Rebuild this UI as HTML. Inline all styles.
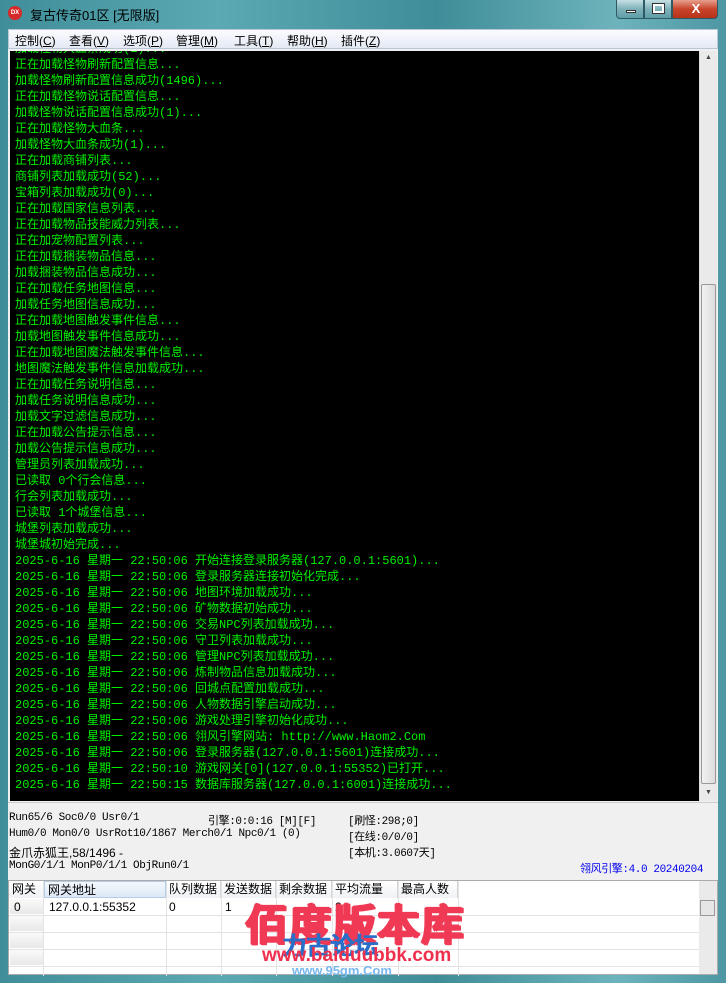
<!DOCTYPE html>
<html><head><meta charset="utf-8"><style>
*{margin:0;padding:0;box-sizing:border-box}
body{width:726px;height:983px;overflow:hidden;position:relative;background:#4a9aa6;font-family:"Liberation Sans","Noto Sans CJK SC",sans-serif}
.frame{position:absolute;left:0;top:0;width:726px;height:983px;background:linear-gradient(90deg,#3f8e99 0%,#5aa9b3 30%,#3f8d98 60%,#6db3bc 85%,#4d97a3 100%)}
.title{position:absolute;left:30px;top:5px;font-size:13px;color:#000}
.icon{position:absolute;left:8px;top:6px;width:14px;height:14px;border-radius:50%;background:#d42a2a;color:#fff;font-size:6px;font-weight:bold;text-align:center;line-height:14px}
.btn{position:absolute;top:0;height:19px;border:1px solid #2d5a63;border-top:none;background:linear-gradient(#c5e0e4,#7fb1ba 50%,#5f9ea8)}
.menu{position:absolute;left:8px;top:29px;width:710px;height:20px;background:linear-gradient(#fbfcfe,#e4eaf4);border:1px solid #b8c6d6;font-size:12px;color:#000}
.menu span{position:absolute;top:2px}
.con{position:absolute;left:8px;top:49px;width:710px;height:753px;background:#f0f0f0}
.black{position:absolute;left:2px;top:2px;width:689px;height:750px;background:#000;overflow:hidden}
.lines{position:absolute;left:5px;top:-10px;font-family:"Liberation Mono","WenQuanYi Zen Hei",monospace;font-size:12px;line-height:16px;color:#00f000;white-space:pre;letter-spacing:0}
.sb{position:absolute;left:691px;top:2px;width:18px;height:750px;background:#eaeaea;border-left:1px solid #ddd}
.thumb{position:absolute;left:1px;top:233px;width:15px;height:500px;border:1px solid #989898;border-radius:2px;background:linear-gradient(90deg,#f2f2f2,#dcdcdc)}
.status{position:absolute;left:8px;top:802px;width:710px;height:78px;background:#f0f0f0;border-top:1px solid #ccc;font-family:"Liberation Mono","WenQuanYi Zen Hei",monospace;font-size:11px;color:#000;letter-spacing:-0.4px}
.status div{position:absolute;white-space:pre}
.grid{position:absolute;left:8px;top:880px;width:710px;height:95px;background:#fff;border:1px solid #aaa;font-size:12px}
.grid .h{position:absolute;top:0;height:17px;border-right:1px solid #d5d5d5;background:linear-gradient(#fff,#f0f2f5);padding-left:3px;line-height:16px}
.gl{position:absolute;top:0;width:1px;height:95px;background:#e3e3e3}
.rw{position:absolute;left:0;width:690px;height:1px;background:#e3e3e3}
.fx{position:absolute;left:1px;width:33px;height:15px;background:linear-gradient(#fafafa,#e8e8e8)}
.wm{position:absolute;font-weight:bold;white-space:nowrap}
</style></head><body>
<div class="frame"></div>
<div class="icon">DX</div>
<div class="title">复古传奇01区 [无限版]</div>
<div class="btn" style="left:616px;width:28px;border-radius:0 0 0 4px"><div style="position:absolute;left:9px;top:10px;width:10px;height:3px;background:#fff;border:1px solid #333"></div></div>
<div class="btn" style="left:644px;width:28px"><div style="position:absolute;left:8px;top:4px;width:11px;height:9px;border:2px solid #fff;outline:1px solid #333"></div></div>
<div class="btn" style="left:672px;width:46px;border-radius:0 0 4px 0;background:linear-gradient(#e8a08e,#c8442b 50%,#b63218)"><div style="position:absolute;left:0;width:46px;top:1px;text-align:center;color:#fff;font-weight:bold;font-size:13px">X</div></div>
<div class="menu">
<span style="left:6px">控制(<u>C</u>)</span><span style="left:60px">查看(<u>V</u>)</span><span style="left:114px">选项(<u>P</u>)</span><span style="left:167px">管理(<u>M</u>)</span><span style="left:225px">工具(<u>T</u>)</span><span style="left:278px">帮助(<u>H</u>)</span><span style="left:332px">插件(<u>Z</u>)</span>
</div>
<div class="con">
<div class="black"><div class="lines">加载怪物大血条成功(1)...
正在加载怪物刷新配置信息...
加载怪物刷新配置信息成功(1496)...
正在加载怪物说话配置信息...
加载怪物说话配置信息成功(1)...
正在加载怪物大血条...
加载怪物大血条成功(1)...
正在加载商铺列表...
商铺列表加载成功(52)...
宝箱列表加载成功(0)...
正在加载国家信息列表...
正在加载物品技能威力列表...
正在加宠物配置列表...
正在加载捆装物品信息...
加载捆装物品信息成功...
正在加载任务地图信息...
加载任务地图信息成功...
正在加载地图触发事件信息...
加载地图触发事件信息成功...
正在加载地图魔法触发事件信息...
地图魔法触发事件信息加载成功...
正在加载任务说明信息...
加载任务说明信息成功...
加载文字过滤信息成功...
正在加载公告提示信息...
加载公告提示信息成功...
管理员列表加载成功...
已读取 0个行会信息...
行会列表加载成功...
已读取 1个城堡信息...
城堡列表加载成功...
城堡城初始完成...
2025-6-16 星期一 22:50:06 开始连接登录服务器(127.0.0.1:5601)...
2025-6-16 星期一 22:50:06 登录服务器连接初始化完成...
2025-6-16 星期一 22:50:06 地图环境加载成功...
2025-6-16 星期一 22:50:06 矿物数据初始成功...
2025-6-16 星期一 22:50:06 交易NPC列表加载成功...
2025-6-16 星期一 22:50:06 守卫列表加载成功...
2025-6-16 星期一 22:50:06 管理NPC列表加载成功...
2025-6-16 星期一 22:50:06 炼制物品信息加载成功...
2025-6-16 星期一 22:50:06 回城点配置加载成功...
2025-6-16 星期一 22:50:06 人物数据引擎启动成功...
2025-6-16 星期一 22:50:06 游戏处理引擎初始化成功...
2025-6-16 星期一 22:50:06 翎风引擎网站: http://www.Haom2.Com
2025-6-16 星期一 22:50:06 登录服务器(127.0.0.1:5601)连接成功...
2025-6-16 星期一 22:50:10 游戏网关[0](127.0.0.1:55352)已打开...
2025-6-16 星期一 22:50:15 数据库服务器(127.0.0.1:6001)连接成功...</div></div>
<div class="sb"><div style="position:absolute;top:3px;left:5px;font-size:7px;color:#444">▲</div><div class="thumb"></div><div style="position:absolute;top:738px;left:5px;font-size:7px;color:#444">▼</div></div>
</div>
<div class="status">
<div style="left:1px;top:9px">Run65/6 Soc0/0 Usr0/1</div>
<div style="left:200px;top:9px">引擎:0:0:16 [M][F]</div>
<div style="left:340px;top:9px">[刷怪:298;0]</div>
<div style="left:1px;top:25px">Hum0/0 Mon0/0 UsrRot10/1867 Merch0/1 Npc0/1 (0)</div>
<div style="left:340px;top:25px">[在线:0/0/0]</div>
<div style="left:1px;top:41px;font-family:'Liberation Sans','Noto Sans CJK SC',sans-serif;font-size:12px;letter-spacing:0">金爪赤狐王,58/1496 -</div>
<div style="left:340px;top:41px">[本机:3.0607天]</div>
<div style="left:1px;top:57px">MonG0/1/1 MonP0/1/1 ObjRun0/1</div>
<div style="left:572px;top:57px;color:#0000ee">翎风引擎:4.0 20240204</div>
</div>
<div class="grid">
<div class="h" style="left:0;width:35px">网关</div>
<div class="h" style="left:35px;width:122px;background:linear-gradient(#f4f8fd,#dde8f6);border:1px solid #b6cbe6">网关地址</div>
<div class="h" style="left:157px;width:55px">队列数据</div>
<div class="h" style="left:212px;width:55px">发送数据</div>
<div class="h" style="left:267px;width:56px">剩余数据</div>
<div class="h" style="left:323px;width:66px">平均流量</div>
<div class="h" style="left:389px;width:60px">最高人数</div>
<div class="gl" style="left:34px"></div><div class="gl" style="left:157px"></div><div class="gl" style="left:212px"></div><div class="gl" style="left:267px"></div><div class="gl" style="left:323px"></div><div class="gl" style="left:389px"></div><div class="gl" style="left:449px"></div>
<div class="rw" style="top:34px"></div><div class="rw" style="top:51px"></div><div class="rw" style="top:68px"></div><div class="rw" style="top:85px"></div>
<div class="fx" style="top:18px"></div><div class="fx" style="top:35px"></div><div class="fx" style="top:52px"></div><div class="fx" style="top:69px"></div>
<div style="position:absolute;top:19px;left:5px">0</div>
<div style="position:absolute;top:19px;left:40px">127.0.0.1:55352</div>
<div style="position:absolute;top:19px;left:160px">0</div>
<div style="position:absolute;top:19px;left:216px">1</div>
<div style="position:absolute;top:19px;left:326px">2</div>
<div style="position:absolute;left:690px;top:0;width:18px;height:93px;background:#eaeaea"><div style="position:absolute;top:19px;left:1px;width:15px;height:16px;border:1px solid #999;background:#e6e6e6"></div></div>
</div>
<div class="wm" style="left:245px;top:892px;font-size:42px;color:#f03a55;font-family:'WenQuanYi Zen Hei',sans-serif;letter-spacing:2px;text-shadow:1px 0 0 #f03a55,-1px 0 0 #f03a55,0 1px 0 #f03a55,0 -1px 0 #f03a55,2px 0 0 #f03a55,2px 1px 0 #f03a55">佰度版本库</div>
<div class="wm" style="left:282px;top:926px;font-size:24px;color:#2a6fc7;font-family:'WenQuanYi Zen Hei',sans-serif;text-shadow:1px 0 0 #2a6fc7">力古论坛</div>
<div class="wm" style="left:262px;top:945px;font-size:19px;color:#ee2f4d;font-family:'Liberation Sans',sans-serif">www.baiduubbk.com</div>
<div class="wm" style="left:292px;top:963px;font-size:13px;color:#7ab8ee;font-family:'Liberation Sans',sans-serif">www.95gm.Com</div>
</body></html>
